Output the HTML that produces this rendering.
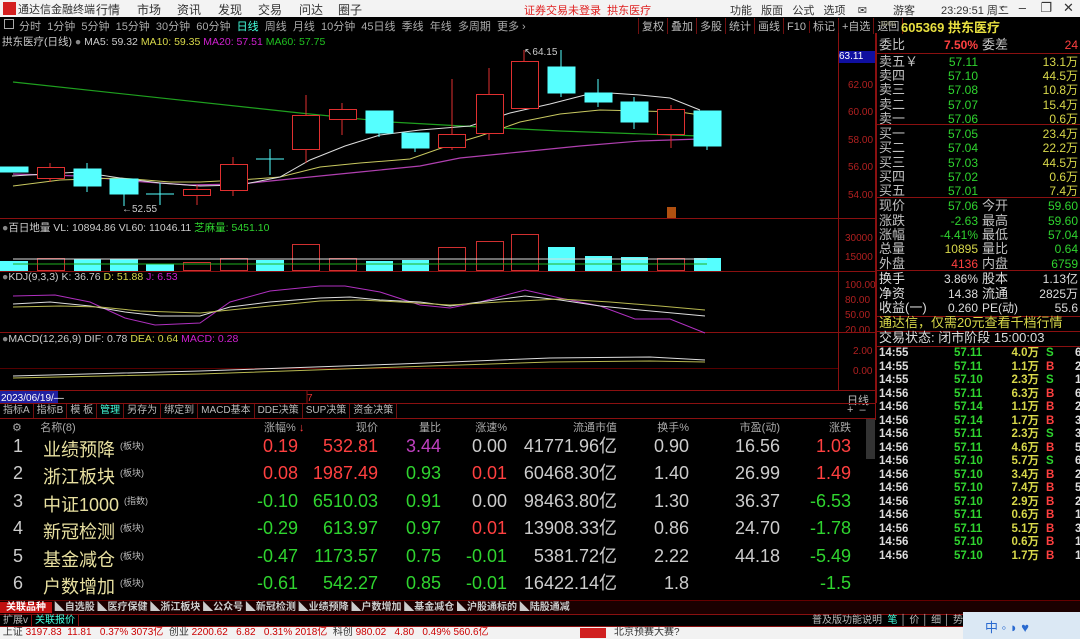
<!DOCTYPE html>
<html><head><meta charset="utf-8"><style>
*{margin:0;padding:0;box-sizing:border-box}
body{width:1080px;height:639px;background:#000;overflow:hidden;position:relative;font-family:"Liberation Sans","Noto Sans CJK SC",sans-serif;color:#c0c0c0}
.a{position:absolute;white-space:nowrap}
.top{left:0;top:0;width:1080px;height:17px;background:#f3f3f3;font-size:12px;color:#333}
.r2{left:0;top:17px;width:1080px;height:16px;background:#000;font-size:11px;color:#aaa}
.rp{font-size:13px;line-height:14.3px}
.rp .a{font-size:12px}
.g{color:#2fd42f}.y{color:#d8d84a}.rd{color:#ff4040}.w{color:#ddd}
.hl{position:absolute;height:1px;background:#8a1010}
.lst{font-size:18px;color:#ccc}
.tb span{display:inline-block;padding:0 3px;border-right:1px solid #701010;color:#bbb}
.rw{position:relative}
.rw .lb{font-size:13px}
.rw .l2{left:103px;font-size:13px!important}
.rw .v1{right:101px}
.rw .v2{right:1px}
</style></head><body>
<div class="a top">
 <div class="a" style="left:3px;top:2px;width:13px;height:13px;background:#d42020"></div>
 <span class="a" style="left:18px;top:1px;font-size:11px">通达信金融终端</span>
 <span class="a" style="left:96px;top:1px">行情</span><span class="a" style="left:137px;top:1px">市场</span><span class="a" style="left:177px;top:1px">资讯</span><span class="a" style="left:218px;top:1px">发现</span><span class="a" style="left:258px;top:1px">交易</span><span class="a" style="left:299px;top:1px">问达</span><span class="a" style="left:338px;top:1px">圈子</span>
 <span class="a" style="left:524px;top:2px;font-size:11px;color:#e02020">证券交易未登录&nbsp; 拱东医疗</span>
 <span class="a" style="left:730px;top:2px;font-size:11px">功能&nbsp;&nbsp; 版面&nbsp;&nbsp; 公式&nbsp;&nbsp; 选项&nbsp;&nbsp;&nbsp; ✉</span>
 <span class="a" style="left:893px;top:2px;font-size:11px">游客</span>
 <span class="a" style="left:941px;top:2px;font-size:11px">23:29:51 周二</span>
 <span class="a" style="left:1000px;top:0px;font-size:13px">‹&nbsp;&nbsp;&nbsp; –&nbsp;&nbsp;&nbsp; ❐&nbsp;&nbsp; ✕</span>
</div>
<div class="a r2">
 <span class="a" style="left:4px;top:2px;width:10px;height:10px;border:1px solid #aaa"></span>
 <span class="a" style="left:19px;top:1px">分时&nbsp; 1分钟&nbsp; 5分钟&nbsp; 15分钟&nbsp; 30分钟&nbsp; 60分钟&nbsp; <span style="color:#4fd">日线</span>&nbsp; 周线&nbsp; 月线&nbsp; 10分钟&nbsp; 45日线&nbsp; 季线&nbsp; 年线&nbsp; 多周期&nbsp; 更多 ›</span>
 <span class="a tb" style="left:638px;top:1px;border-left:1px solid #701010"><span>复权</span><span>叠加</span><span>多股</span><span>统计</span><span>画线</span><span>F10</span><span>标记</span><span>+自选</span><span>返回</span></span>
 <span class="a" style="left:880px;top:4px;font-size:7px;color:#aa8">1000</span>
 <span class="a" style="left:901px;top:0px;font-size:13px;color:#e8e040;font-weight:bold">605369 拱东医疗</span>
</div>
<div class="a" style="left:2px;top:34px;font-size:10.5px;color:#ccc">拱东医疗(日线) <span style="color:#888">●</span> MA5: 59.32 <span class="y">MA10: 59.35</span> <span style="color:#d020d0">MA20: 57.51</span> <span style="color:#20c020">MA60: 57.75</span></div>
<div class="a" style="left:2px;top:220px;font-size:10.5px;color:#ccc"><span style="color:#888">●</span>百日地量 VL: 10894.86 VL60: 11046.11 <span class="g">芝麻量: 5451.10</span></div>
<div class="a" style="left:2px;top:271px;font-size:10.5px;color:#ccc"><span style="color:#888">●</span>KDJ(9,3,3) K: 36.76 <span class="y">D: 51.88</span> <span style="color:#d020d0">J: 6.53</span></div>
<div class="a" style="left:2px;top:333px;font-size:10.5px;color:#ccc"><span style="color:#888">●</span>MACD(12,26,9) DIF: 0.78 <span class="y">DEA: 0.64</span> <span style="color:#d020d0">MACD: 0.28</span></div>
<div class="a" style="left:848px;top:44px;font-size:10px;color:#b02020;line-height:27.5px">64.00<br>62.00<br>60.00<br>58.00<br>56.00<br>54.00</div>
<div class="a" style="left:839px;top:51px;width:36px;height:12px;background:#0f0fa0;color:#fff;font-size:10px">63.11</div>
<div class="a" style="left:845px;top:229px;font-size:10px;color:#b02020;line-height:19px">30000<br>15000</div>
<div class="a" style="left:845px;top:278px;font-size:10px;color:#b02020;line-height:15px">100.00<br>80.00<br>50.00<br>20.00</div>
<div class="a" style="left:853px;top:342px;font-size:10px;color:#b02020;line-height:20px">2.00<br>0.00</div>
<div class="a" style="left:847px;top:392px;font-size:11px;color:#bbb">日线</div>
<div class="a" style="left:847px;top:404px;font-size:11px;color:#bbb">+ &nbsp;–</div>
<svg class="a" style="left:0;top:0" width="876" height="420">
 <g stroke="#8a1010" stroke-width="1" fill="none">
  <line x1="0" y1="218.5" x2="876" y2="218.5"/><line x1="0" y1="271.5" x2="876" y2="271.5"/><line x1="0" y1="332.5" x2="876" y2="332.5"/><line x1="0" y1="390.5" x2="876" y2="390.5"/><line x1="0" y1="403.5" x2="876" y2="403.5"/><line x1="0" y1="418.5" x2="876" y2="418.5"/>
  <line x1="838.5" y1="33" x2="838.5" y2="390"/><line x1="875.5" y1="33" x2="875.5" y2="600"/>
  <line x1="0" y1="368.5" x2="838" y2="368.5" stroke="#500"/>
  <line x1="307" y1="390" x2="307" y2="403"/>
 </g>
 <polyline fill="none" stroke="#1fa01f" stroke-width="1.2" points="13,82 300,113 390,122 480,127 560,131 700,136"/>
 <polyline fill="none" stroke="#b040b0" stroke-width="1.2" points="13,174 80,176 130,181 190,185 240,184 300,178 360,172 420,166 460,158 520,152 580,146 640,141 700,139"/>
 <polyline fill="none" stroke="#c8c860" stroke-width="1" points="13,186 60,180 120,178 170,182 200,182 240,180 280,177 320,167 360,163 410,159 450,145 480,136 520,122 560,114 600,110 640,111 680,112 700,115"/>
 <polyline fill="none" stroke="#ddd" stroke-width="1" points="12,176 80,172 120,178 160,183 200,186 240,185 280,177 310,160 345,146 380,135 420,130 470,126 510,113 550,104 585,95 610,93 640,95 670,98 700,110"/>
 <g stroke="#e03030" fill="#000">
  <line x1="50" y1="163" x2="50" y2="182"/><rect x="37.5" y="167.5" width="27" height="11"/>
  <line x1="197" y1="185" x2="197" y2="205"/><rect x="183.5" y="189.5" width="27" height="6"/>
  <line x1="233" y1="157" x2="233" y2="196"/><rect x="220.5" y="164.5" width="27" height="26"/>
  <line x1="306" y1="95" x2="306" y2="163"/><rect x="292.5" y="115.5" width="27" height="34"/>
  <line x1="342" y1="103" x2="342" y2="135"/><rect x="329.5" y="109.5" width="27" height="10"/>
  <line x1="452" y1="79" x2="452" y2="150"/><rect x="438.5" y="134.5" width="27" height="13"/>
  <line x1="489" y1="68" x2="489" y2="140"/><rect x="476.5" y="94.5" width="27" height="39"/>
  <line x1="524" y1="50" x2="524" y2="61"/><rect x="511.5" y="61.5" width="27" height="47"/>
  <line x1="671" y1="105" x2="671" y2="148"/><rect x="657.5" y="109.5" width="27" height="25"/>
 </g>
 <g stroke="#5ff" fill="#5ff">
  <rect x="0" y="167" width="28" height="5"/>
  <line x1="87" y1="163" x2="87" y2="192"/><rect x="74" y="169" width="27" height="17"/>
  <line x1="124" y1="179" x2="124" y2="206"/><rect x="110" y="179" width="28" height="15"/>
  <line x1="146" y1="194" x2="174" y2="194"/><line x1="160" y1="183" x2="160" y2="205"/>
  <line x1="256" y1="159" x2="284" y2="159"/><line x1="270" y1="149" x2="270" y2="175"/>
  <line x1="379" y1="111" x2="379" y2="137"/><rect x="366" y="111" width="27" height="22"/>
  <line x1="415" y1="133" x2="415" y2="152"/><rect x="402" y="133" width="27" height="15"/>
  <line x1="561" y1="50" x2="561" y2="97"/><rect x="548" y="67" width="27" height="26"/>
  <line x1="598" y1="79" x2="598" y2="107"/><rect x="585" y="93" width="27" height="9"/>
  <line x1="634" y1="97" x2="634" y2="129"/><rect x="621" y="102" width="27" height="20"/>
  <line x1="707" y1="111" x2="707" y2="150"/><rect x="694" y="111" width="27" height="35"/>
 </g>
 <text x="122" y="212" fill="#ccc" font-size="10" font-family="Liberation Sans">←52.55</text>
 <text x="524" y="55" fill="#ccc" font-size="10" font-family="Liberation Sans">↖64.15</text>
 <rect x="667" y="207" width="9" height="11" fill="#b05010"/>
 <g fill="#5ff"><rect x="0" y="261" width="28" height="10"/><rect x="74" y="259" width="27" height="12"/><rect x="110" y="259" width="28" height="12"/><rect x="146" y="264" width="28" height="7"/><rect x="256" y="260" width="28" height="11"/><rect x="366" y="261" width="27" height="10"/><rect x="402" y="260" width="27" height="11"/><rect x="548" y="247" width="27" height="24"/><rect x="585" y="256" width="27" height="15"/><rect x="621" y="257" width="27" height="14"/><rect x="694" y="258" width="27" height="13"/></g>
 <g fill="none" stroke="#d03030"><rect x="37.5" y="258.5" width="27" height="12"/><rect x="183.5" y="262.5" width="27" height="8"/><rect x="220.5" y="258.5" width="27" height="12"/><rect x="292.5" y="244.5" width="27" height="26"/><rect x="329.5" y="258.5" width="27" height="12"/><rect x="438.5" y="247.5" width="27" height="23"/><rect x="476.5" y="241.5" width="27" height="29"/><rect x="511.5" y="234.5" width="27" height="36"/><rect x="657.5" y="258.5" width="27" height="12"/></g>
 <line x1="13" y1="259" x2="707" y2="259" stroke="#ddd"/>
 <line x1="13" y1="264" x2="707" y2="264" stroke="#20b020"/>
 <polyline fill="none" stroke="#b030c0" points="13,296 55,295 90,302 125,318 155,325 200,323 230,302 270,291 320,286 345,286 380,292 420,305 450,308 480,302 525,290 560,298 600,306 635,319 670,319 705,333"/>
 <polyline fill="none" stroke="#ddd" points="13,304 50,302 90,306 125,312 160,316 200,316 230,307 270,302 320,298 350,297 380,300 420,302 450,306 480,302 525,296 560,300 600,306 640,310 705,316"/>
 <polyline fill="none" stroke="#b8b850" points="13,307 60,306 100,307 140,311 200,313 230,310 270,306 320,301 360,300 400,302 450,305 500,302 560,299 610,302 660,306 705,310"/>
 <polyline fill="none" stroke="#ddd" points="13,376 200,371 400,364 550,358 650,357 705,360"/>
 <polyline fill="none" stroke="#b8b850" points="13,378 200,374 400,367 550,362 650,361 705,362"/>
 <rect x="0" y="391" width="58" height="12" fill="#2020a0"/>
 <text x="1" y="401" fill="#fff" font-size="10" font-family="Liberation Sans">2023/06/19/—</text>
 <text x="307" y="401" fill="#e03030" font-size="10" font-family="Liberation Sans">7</text>
</svg>
<div class="a tb" style="left:0;top:404px;font-size:10px;line-height:14px"><span>指标A</span><span>指标B</span><span>模 板</span><span style="color:#4fd">管理</span><span>另存为</span><span>绑定到</span><span>MACD基本</span><span>DDE决策</span><span>SUP决策</span><span>资金决策</span></div>
<div class="a" style="left:12px;top:419px;font-size:11px;color:#aaa">⚙&nbsp;&nbsp;&nbsp;&nbsp;&nbsp; 名称(8)</div>
<div class="a" style="left:264px;top:419px;font-size:11px;color:#aaa">涨幅% <span class="rd">↓</span></div>
<div class="a lst" style="left:0;top:419px;font-size:11px;color:#aaa;width:876px">
 <span class="a" style="right:498px">现价</span><span class="a" style="right:435px">量比</span><span class="a" style="right:369px">涨速%</span><span class="a" style="right:259px">流通市值</span><span class="a" style="right:187px">换手%</span><span class="a" style="right:96px">市盈(动)</span><span class="a" style="right:25px">涨跌</span>
</div>
<div class="a lst" style="left:0;top:433px;width:876px;height:165px;line-height:27.4px">
<div style="position:relative;height:27.4px"><span class="a" style="left:13px">1</span><span class="a" style="left:43px;color:#e8e0a0">业绩预降 <sup style="font-size:9px;color:#bbb">(板块)</sup></span><span class="a rd" style="right:578px">0.19</span><span class="a rd" style="right:498px">532.81</span><span class="a" style="right:435px;color:#c040c0">3.44</span><span class="a" style="right:369px">0.00</span><span class="a" style="right:259px">41771.96亿</span><span class="a" style="right:187px">0.90</span><span class="a" style="right:96px">16.56</span><span class="a rd" style="right:25px">1.03</span></div>
<div style="position:relative;height:27.4px"><span class="a" style="left:13px">2</span><span class="a" style="left:43px;color:#e8e0a0">浙江板块 <sup style="font-size:9px;color:#bbb">(板块)</sup></span><span class="a rd" style="right:578px">0.08</span><span class="a rd" style="right:498px">1987.49</span><span class="a g" style="right:435px">0.93</span><span class="a rd" style="right:369px">0.01</span><span class="a" style="right:259px">60468.30亿</span><span class="a" style="right:187px">1.40</span><span class="a" style="right:96px">26.99</span><span class="a rd" style="right:25px">1.49</span></div>
<div style="position:relative;height:27.4px"><span class="a" style="left:13px">3</span><span class="a" style="left:43px;color:#e8e0a0">中证1000 <sup style="font-size:9px;color:#bbb">(指数)</sup></span><span class="a g" style="right:578px">-0.10</span><span class="a g" style="right:498px">6510.03</span><span class="a g" style="right:435px">0.91</span><span class="a" style="right:369px">0.00</span><span class="a" style="right:259px">98463.80亿</span><span class="a" style="right:187px">1.30</span><span class="a" style="right:96px">36.37</span><span class="a g" style="right:25px">-6.53</span></div>
<div style="position:relative;height:27.4px"><span class="a" style="left:13px">4</span><span class="a" style="left:43px;color:#e8e0a0">新冠检测 <sup style="font-size:9px;color:#bbb">(板块)</sup></span><span class="a g" style="right:578px">-0.29</span><span class="a g" style="right:498px">613.97</span><span class="a g" style="right:435px">0.97</span><span class="a rd" style="right:369px">0.01</span><span class="a" style="right:259px">13908.33亿</span><span class="a" style="right:187px">0.86</span><span class="a" style="right:96px">24.70</span><span class="a g" style="right:25px">-1.78</span></div>
<div style="position:relative;height:27.4px"><span class="a" style="left:13px">5</span><span class="a" style="left:43px;color:#e8e0a0">基金减仓 <sup style="font-size:9px;color:#bbb">(板块)</sup></span><span class="a g" style="right:578px">-0.47</span><span class="a g" style="right:498px">1173.57</span><span class="a g" style="right:435px">0.75</span><span class="a g" style="right:369px">-0.01</span><span class="a" style="right:259px">5381.72亿</span><span class="a" style="right:187px">2.22</span><span class="a" style="right:96px">44.18</span><span class="a g" style="right:25px">-5.49</span></div>
<div style="position:relative;height:27.4px"><span class="a" style="left:13px">6</span><span class="a" style="left:43px;color:#e8e0a0">户数增加 <sup style="font-size:9px;color:#bbb">(板块)</sup></span><span class="a g" style="right:578px">-0.61</span><span class="a g" style="right:498px">542.27</span><span class="a g" style="right:435px">0.85</span><span class="a g" style="right:369px">-0.01</span><span class="a" style="right:259px">16422.14亿</span><span class="a" style="right:187px">1.8</span><span class="a g" style="right:25px">-1.5</span></div>
</div>
<div class="a" style="left:866px;top:419px;width:9px;height:40px;background:#333"></div>
<div class="a" style="left:876px;top:33px;width:204px;height:370px;border-left:1px solid #8a1010"></div>
<div class="hl" style="left:876px;top:53px;width:204px"></div><div class="hl" style="left:876px;top:124px;width:204px"></div><div class="hl" style="left:876px;top:197px;width:204px"></div><div class="hl" style="left:876px;top:270px;width:204px"></div><div class="hl" style="left:876px;top:316px;width:204px"></div><div class="hl" style="left:876px;top:331px;width:204px"></div><div class="hl" style="left:876px;top:346px;width:204px"></div>
<div class="a rp" style="left:879px;top:38px;width:200px">
<div class="rw" style="height:15px">委比<span class="a rd v1" style="font-weight:bold">7.50%</span><span class="a l2">委差</span><span class="a rd v2">24</span></div>
</div>
<div class="a rp" style="left:879px;top:55px;width:200px">
<div class="rw" style="height:14.2px">卖五￥<span class="a g v1">57.11</span><span class="a y v2">13.1万</span></div>
<div class="rw" style="height:14.2px">卖四<span class="a g v1">57.10</span><span class="a y v2">44.5万</span></div>
<div class="rw" style="height:14.2px">卖三<span class="a g v1">57.08</span><span class="a y v2">10.8万</span></div>
<div class="rw" style="height:14.2px">卖二<span class="a g v1">57.07</span><span class="a y v2">15.4万</span></div>
<div class="rw" style="height:15px">卖一<span class="a g v1">57.06</span><span class="a y v2">0.6万</span></div>
<div class="rw" style="height:14.4px">买一<span class="a g v1">57.05</span><span class="a y v2">23.4万</span></div>
<div class="rw" style="height:14.4px">买二<span class="a g v1">57.04</span><span class="a y v2">22.2万</span></div>
<div class="rw" style="height:14.4px">买三<span class="a g v1">57.03</span><span class="a y v2">44.5万</span></div>
<div class="rw" style="height:14.4px">买四<span class="a g v1">57.02</span><span class="a y v2">0.6万</span></div>
<div class="rw" style="height:14.8px">买五<span class="a g v1">57.01</span><span class="a y v2">7.4万</span></div>
<div class="rw" style="height:14.4px">现价<span class="a g v1">57.06</span><span class="a l2">今开</span><span class="a g v2">59.60</span></div>
<div class="rw" style="height:14.4px">涨跌<span class="a g v1">-2.63</span><span class="a l2">最高</span><span class="a g v2">59.60</span></div>
<div class="rw" style="height:14.4px">涨幅<span class="a g v1">-4.41%</span><span class="a l2">最低</span><span class="a g v2">57.04</span></div>
<div class="rw" style="height:14.4px">总量<span class="a y v1">10895</span><span class="a l2">量比</span><span class="a g v2">0.64</span></div>
<div class="rw" style="height:15.5px">外盘<span class="a rd v1">4136</span><span class="a l2">内盘</span><span class="a g v2">6759</span></div>
<div class="rw" style="height:14.4px;color:#ddd">换手<span class="a v1">3.86%</span><span class="a l2">股本</span><span class="a v2">1.13亿</span></div>
<div class="rw" style="height:14.4px;color:#ddd">净资<span class="a v1">14.38</span><span class="a l2">流通</span><span class="a v2">2825万</span></div>
<div class="rw" style="height:15.5px;color:#ddd">收益(一)<span class="a v1">0.260</span><span class="a l2" style="font-size:12px!important">PE(动)</span><span class="a v2">55.6</span></div>
<div class="rw" style="height:15px;color:#d8d84a">通达信，仅需20元查看千档行情</div>
<div class="rw" style="height:15px;color:#ddd">交易状态: 闭市阶段 15:00:03</div>
</div>
<div class="a" style="left:879px;top:347px;width:200px;font-size:11.5px;line-height:13.5px;font-weight:bold;color:#ddd">
<div class="rw" style="height:13.5px">14:55<span class="a g" style="left:75px">57.11</span><span class="a y" style="right:40px">4.0万</span><span class="a g" style="left:167px">S</span><span class="a" style="left:196px">6</span></div>
<div class="rw" style="height:13.5px">14:55<span class="a g" style="left:75px">57.11</span><span class="a y" style="right:40px">1.1万</span><span class="a rd" style="left:167px">B</span><span class="a" style="left:196px">2</span></div>
<div class="rw" style="height:13.5px">14:55<span class="a g" style="left:75px">57.10</span><span class="a y" style="right:40px">2.3万</span><span class="a g" style="left:167px">S</span><span class="a" style="left:196px">1</span></div>
<div class="rw" style="height:13.5px">14:56<span class="a g" style="left:75px">57.11</span><span class="a y" style="right:40px">6.3万</span><span class="a rd" style="left:167px">B</span><span class="a" style="left:196px">6</span></div>
<div class="rw" style="height:13.5px">14:56<span class="a g" style="left:75px">57.14</span><span class="a y" style="right:40px">1.1万</span><span class="a rd" style="left:167px">B</span><span class="a" style="left:196px">2</span></div>
<div class="rw" style="height:13.5px">14:56<span class="a g" style="left:75px">57.14</span><span class="a y" style="right:40px">1.7万</span><span class="a rd" style="left:167px">B</span><span class="a" style="left:196px">3</span></div>
<div class="rw" style="height:13.5px">14:56<span class="a g" style="left:75px">57.11</span><span class="a y" style="right:40px">2.3万</span><span class="a g" style="left:167px">S</span><span class="a" style="left:196px">3</span></div>
<div class="rw" style="height:13.5px">14:56<span class="a g" style="left:75px">57.11</span><span class="a y" style="right:40px">4.6万</span><span class="a rd" style="left:167px">B</span><span class="a" style="left:196px">5</span></div>
<div class="rw" style="height:13.5px">14:56<span class="a g" style="left:75px">57.10</span><span class="a y" style="right:40px">5.7万</span><span class="a g" style="left:167px">S</span><span class="a" style="left:196px">6</span></div>
<div class="rw" style="height:13.5px">14:56<span class="a g" style="left:75px">57.10</span><span class="a y" style="right:40px">3.4万</span><span class="a rd" style="left:167px">B</span><span class="a" style="left:196px">2</span></div>
<div class="rw" style="height:13.5px">14:56<span class="a g" style="left:75px">57.10</span><span class="a y" style="right:40px">7.4万</span><span class="a rd" style="left:167px">B</span><span class="a" style="left:196px">5</span></div>
<div class="rw" style="height:13.5px">14:56<span class="a g" style="left:75px">57.10</span><span class="a y" style="right:40px">2.9万</span><span class="a rd" style="left:167px">B</span><span class="a" style="left:196px">2</span></div>
<div class="rw" style="height:13.5px">14:56<span class="a g" style="left:75px">57.11</span><span class="a y" style="right:40px">0.6万</span><span class="a rd" style="left:167px">B</span><span class="a" style="left:196px">1</span></div>
<div class="rw" style="height:13.5px">14:56<span class="a g" style="left:75px">57.11</span><span class="a y" style="right:40px">5.1万</span><span class="a rd" style="left:167px">B</span><span class="a" style="left:196px">3</span></div>
<div class="rw" style="height:13.5px">14:56<span class="a g" style="left:75px">57.10</span><span class="a y" style="right:40px">0.6万</span><span class="a rd" style="left:167px">B</span><span class="a" style="left:196px">1</span></div>
<div class="rw" style="height:13.5px">14:56<span class="a g" style="left:75px">57.10</span><span class="a y" style="right:40px">1.7万</span><span class="a rd" style="left:167px">B</span><span class="a" style="left:196px">1</span></div>
</div>
<div class="a" style="left:0;top:600px;width:1080px;height:14px;background:#1a0000;border-top:1px solid #600;font-size:10px;line-height:13px;color:#ddd;font-weight:bold">
 <span style="background:#c01010;color:#fff;padding:0 6px 0 6px">关联品种</span><span style="color:#ccc"> ◣自选股 ◣医疗保健 ◣浙江板块 ◣公众号 ◣新冠检测 ◣业绩预降 ◣户数增加 ◣基金减仓 ◣沪股通标的 ◣陆股通减</span>
</div>
<div class="a" style="left:0;top:614px;width:1080px;height:13px;border-top:1px solid #8a1010;border-bottom:1px solid #8a1010;font-size:10px;line-height:12px;color:#bbb">
 <span style="padding:0 3px;border-right:1px solid #8a1010">扩展v</span><span style="color:#4fd;padding:0 3px;border-right:1px solid #8a1010">关联报价</span>
 <span class="a" style="left:812px;top:0;">普及版功能说明 <span style="color:#4fd">&nbsp;笔&nbsp;</span>│&nbsp;价&nbsp;│&nbsp;细&nbsp;│&nbsp;势</span>
</div>
<div class="a" style="left:0;top:627px;width:1080px;height:12px;background:#f2f2f2;font-size:10px;line-height:12px;color:#333">
 &nbsp;上证 <span style="color:#c00">3197.83&nbsp; 11.81&nbsp;&nbsp; 0.37% 3073亿</span>&nbsp; 创业 <span style="color:#c00">2200.62&nbsp;&nbsp; 6.82&nbsp;&nbsp; 0.31% 2018亿</span>&nbsp; 科创 <span style="color:#c00">980.02&nbsp;&nbsp; 4.80&nbsp;&nbsp; 0.49% 560.6亿</span>
 <span class="a" style="left:580px;top:1px;width:26px;height:10px;background:#d02020"></span><span class="a" style="left:614px;top:0">北京预赛大赛?</span>
</div>
<div class="a" style="left:963px;top:612px;width:117px;height:27px;background:#dbe8f4"><span class="a" style="left:22px;top:5px;font-size:13px;color:#2a6ad0">中 ◦ ◗ ♥</span></div>
</body></html>
